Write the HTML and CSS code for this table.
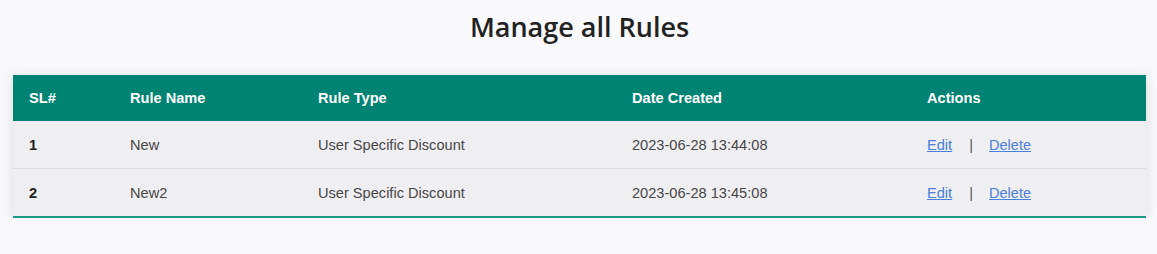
FILE: index.html
```html
<!DOCTYPE html>
<html lang="en">
<head>
    <meta charset="UTF-8">
    <meta name="viewport" content="width=device-width, initial-scale=1.0">
    <title>Manage all Rules</title>
    <link rel="stylesheet" href="styles.css">
</head>
<body>
    <div class="page">
        <h1 class="page-title">Manage all Rules</h1>
        <table class="rules-table">
            <thead>
                <tr>
                    <th class="col-sl">SL#</th>
                    <th class="col-name">Rule Name</th>
                    <th class="col-type">Rule Type</th>
                    <th class="col-date">Date Created</th>
                    <th>Actions</th>
                </tr>
            </thead>
            <tbody>
                <tr>
                    <td class="sl">1</td>
                    <td>New</td>
                    <td>User Specific Discount</td>
                    <td>2023-06-28 13:44:08</td>
                    <td class="actions"><a href="#">Edit</a><span class="sep">|</span><a href="#">Delete</a></td>
                </tr>
                <tr>
                    <td class="sl">2</td>
                    <td>New2</td>
                    <td>User Specific Discount</td>
                    <td>2023-06-28 13:45:08</td>
                    <td class="actions"><a href="#">Edit</a><span class="sep">|</span><a href="#">Delete</a></td>
                </tr>
            </tbody>
        </table>
    </div>
</body>
</html>
```

FILE: styles.css
```css
body {
    margin: 0;
    padding: 0;
    background: #f9f9fb;
    font-family: 'Liberation Sans', Arial, sans-serif;
}
.page {
    padding: 0 11px 0 13px;
}
.page-title {
    margin: 0;
    padding-top: 8px;
    height: 75px;
    box-sizing: border-box;
    text-align: center;
    font-family: 'Open Sans', 'Noto Sans', sans-serif;
    font-weight: 600;
    font-size: 27px;
    line-height: 38px;
    color: #222;
}
.rules-table {
    width: 100%;
    border-collapse: collapse;
    background: #efeef0;
    box-shadow: 0 2px 12px rgba(0, 0, 0, 0.12);
    border-bottom: 2px solid #1c9a87;
    font-size: 14.6px;
}
.rules-table th {
    background: #008372;
    color: #fff;
    font-weight: bold;
    text-align: left;
    height: 46px;
    padding: 0 16px;
}
.rules-table td {
    height: 47px;
    padding: 0 16px;
    color: #474747;
    border-top: 1px solid #dddcde;
}
.rules-table tbody tr:first-child td {
    border-top: none;
}
.col-sl { width: 69px; }
.col-name { width: 156px; }
.col-type { width: 282px; }
.col-date { width: 263px; }
.rules-table td.sl {
    font-weight: bold;
    color: #222;
}
.actions a {
    color: #4a7fdc;
    text-decoration: underline;
}
.actions .sep {
    color: #555;
    margin: 0 16px 0 17px;
}
```
